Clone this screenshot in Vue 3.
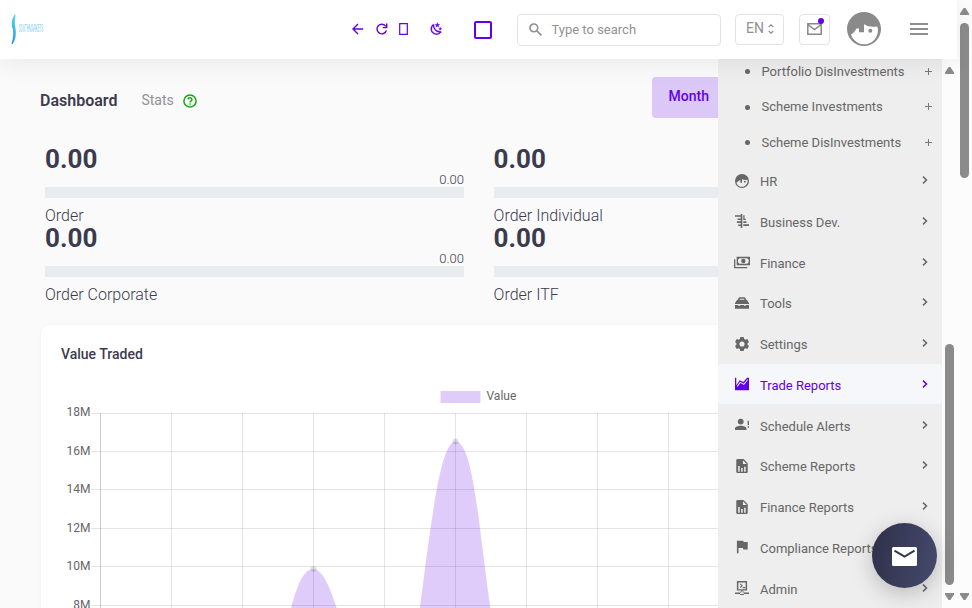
<script setup>
const stats = [
  { value: '0.00', side: '0.00', label: 'Order' },
  { value: '0.00', side: '', label: 'Order Individual' },
  { value: '0.00', side: '0.00', label: 'Order Corporate' },
  { value: '0.00', side: '', label: 'Order ITF' },
]
const subItems = ['Portfolio DisInvestments', 'Scheme Investments', 'Scheme DisInvestments']
const report = 'M14.5 1H5a2 2 0 0 0-2 2v18a2 2 0 0 0 2 2h14a2 2 0 0 0 2-2V7.500L14.5 1ZM13.500 9V3L19.500 9H13.500ZM6 12h2.400v9h-2.400v-9Zm4.700 3h2.400v6h-2.400v-6Zm4.700-2H17.800v8h-2.400v-8Z'
const items = [
  { name: 'HR', icon: 'M12 1a11 11 0 1 0 0 22 11 11 0 0 0 0-22ZM3.200 14.300C5.200 13.900 7.100 12.300 7.800 11H9.400v2.800a1.300 1.300 0 0 0 2.600 0V9.100h.6C13.900 10.400 16.500 10.700 20.600 10.100A8.800 8.800 0 0 1 3.200 14.300ZM16.500 11.800a1.400 1.400 0 1 0 0 2.800 1.400 1.400 0 0 0 0-2.800Z' },
  { name: 'Business Dev.', icon: 'M1 3h9V1h2.500v22H10v-3H6v-2.500h4v-2.500H4v-2.500h6v-2H5V8h5V5.500H1V3ZM14 3h2v5.500h2v2h-4V3ZM14 12.500h5v2.500h-5v-2.500ZM14 17h9v3h-9v-3Z' },
  { name: 'Finance', wide: true, icon: 'M4 4h20v13H4V4Zm4 2.200a3 3 0 0 1-2 2v4.600a3 3 0 0 1 2 2h12a3 3 0 0 1 2-2V8.200a3 3 0 0 1-2-2H8Zm6 1a3.300 3.300 0 1 1 0 6.600 3.300 3.300 0 0 1 0-6.600ZM0 8h2v11.500h18v2H0V8Z' },
  { name: 'Tools', icon: 'M8 3h8l2 2v2h1.500L23 12v1.500H1V12l3.500-5H6V5l2-2Zm.500 2.500V7h7V5.500h-7ZM1 15h5v1.500h3V15h6v1.500h3V15h5V21H1v-6Z' },
  { name: 'Settings', icon: 'm9.300 1-.6 3a8.500 8.500 0 0 0-2.100 1.200L3.700 4.100 1 8.800l2.300 2a8 8 0 0 0 0 2.400l-2.300 2 2.700 4.700 2.900-1.100A8.500 8.500 0 0 0 8.700 20l.6 3h5.400l.6-3a8.500 8.500 0 0 0 2.100-1.200l2.900 1.100 2.700-4.700-2.300-2a8 8 0 0 0 0-2.400l2.300-2-2.700-4.700-2.900 1.100A8.500 8.500 0 0 0 15.300 4l-.6-3H9.300ZM12 8a4 4 0 1 1 0 8 4 4 0 0 1 0-8Z' },
  { name: 'Trade Reports', active: true, icon: 'M1 2h2v12l5.500-8 5.500 3 6-7h3v20H1V2Zm3.500 15 5-6.500 5.500 3L21 6V4l-6.500 7.700L9 8.500l-4.500 6V17Z' },
  { name: 'Schedule Alerts', icon: 'M10 2a4.600 4.600 0 1 1 0 9.200 4.600 4.600 0 0 1 0-9.200ZM1 20v-2.500c0-3 5-4.500 9-4.500s9 1.500 9 4.500V20H1ZM20.800 5.500H23V12h-2.200V5.500Zm0 8.500H23V16.500h-2.200v-2.500Z' },
  { name: 'Scheme Reports', icon: report },
  { name: 'Finance Reports', icon: report },
  { name: 'Compliance Reports', icon: 'M4 2h10l.5 2H21v12h-7l-.5-2.500H6.500V22H4V2Z' },
  { name: 'Admin', icon: 'M4 1h16v15h-7v3h10v2.500H1V19h10v-3H4V1Zm2.300 2.200v10.600h11.400V3.200H6.300ZM9 4.500l4.500 4L9 12.500V10l2-1.500L9 7V4.500Zm4 6h4v2h-4v-2ZM9 17.500h6V23H9v-5.500Z' },
]
const cols = [171.5, 242.5, 313.5, 384.5, 455.5, 526.5, 597.5, 668.5]
const rows = [
  { y: 413.5, ty: 416, label: '18M' },
  { y: 451.5, ty: 455, label: '16M' },
  { y: 489.5, ty: 493, label: '14M' },
  { y: 528.5, ty: 532, label: '12M' },
  { y: 566.5, ty: 570, label: '10M' },
  { y: 605.5, ty: 608.5, label: '8M' },
]
</script>

<template>
  <div class="page">
    <div class="view">
      <header class="top">
        <svg class="logo" width="36" height="34" viewBox="0 0 36 34">
          <defs>
            <linearGradient id="lg" x1="0" x2="0" y1="0" y2="1">
              <stop offset="0" stop-color="#45d6f3" /><stop offset="1" stop-color="#2b9ae0" />
            </linearGradient>
          </defs>
          <path d="M5 2Q1.500 8 2.500 13Q5.500 20 2 31Q6.500 24 4.800 15Q3.300 10 5 2Z" fill="url(#lg)" stroke="url(#lg)" stroke-width="1.200" />
          <g transform="translate(9 19) scale(.31 1)"><text>SOUTHMARKETS</text></g>
        </svg>
        <div class="tools">
          <svg class="t1" width="12" height="12" viewBox="0 0 12 12"><path d="M11.200 6H1.200M6 1 1 6 6 11" /></svg>
          <svg class="t2" width="12" height="12" viewBox="0 0 12 12"><path d="M9.800 3.300A4.800 4.800 0 1 0 10.400 7.500" /><path d="M10.700.6v4H6.800" /></svg>
          <svg class="t3" width="9" height="12" viewBox="0 0 9 12"><path d="M.7.7h7.600v10.600H.7z" /></svg>
          <svg class="t4" width="13" height="13" viewBox="1 0 22 22.500"><path d="M17.750,4.090L15.220,6.030L16.130,9.090L13.500,7.280L10.870,9.090L11.780,6.030L9.250,4.090L12.440,4L13.500,1L14.560,4L17.750,4.090M21.250,11L19.610,12.250L20.200,14.230L18.500,13.060L16.800,14.230L17.390,12.250L15.750,11L17.810,10.950L18.500,9L19.190,10.950L21.250,11M18.970,15.950C19.800,15.870 20.690,17.050 20.160,17.800C19.840,18.250 19.500,18.670 19.080,19.070C15.170,23 8.840,23 4.940,19.070C1.030,15.170 1.030,8.830 4.940,4.930C5.340,4.530 5.760,4.170 6.210,3.850C6.960,3.320 8.140,4.210 8.060,5.040C7.790,7.900 8.750,10.870 10.950,13.060C13.140,15.260 16.100,16.220 18.970,15.950M17.330,17.970C14.500,17.810 11.700,16.640 9.530,14.500C7.360,12.310 6.200,9.500 6.040,6.680C3.230,9.820 3.340,14.640 6.350,17.660C9.370,20.670 14.190,20.780 17.330,17.970Z" class="solid" /></svg>
          <span class="square"></span>
        </div>
        <div class="search">
          <svg width="13" height="13" viewBox="0 0 14 14"><circle cx="5.200" cy="5.200" r="4.200" /><path d="m8.300 8.300 5 5" /></svg>
          <span>Type to search</span>
        </div>
        <div class="lang"><span>EN</span>
          <svg width="6" height="10" viewBox="0 0 6 10"><path d="M.7 3 3 .8 5.300 3M.7 7 3 9.200 5.300 7" /></svg>
        </div>
        <div class="mail">
          <svg width="15" height="12" viewBox="0 0 15 12"><path d="M.8.8h13.400v10.400H.8ZM.8 1.500l6.700 5 6.700-5" /></svg>
          <i></i>
        </div>
        <svg class="avatar" width="34" height="34" viewBox="0 0 34 34">
          <circle cx="17" cy="17" r="17" />
          <path d="M4 22.500C6 21.500 8 19.500 9.500 16.500H12V20.300H17V12.500H18C20 14.500 24 15 30.300 14.500A13.600 13.600 0 0 1 4 22.500Z" class="face" />
          <circle cx="23.300" cy="18.800" r="2" />
        </svg>
        <div class="burger"><b></b><b></b><b></b></div>
      </header>

      <div class="body">
        <main class="main">
          <div class="heading">
            <h1>Dashboard</h1>
            <span class="sub">Stats</span>
            <svg width="14" height="14" viewBox="0 0 14 14"><circle cx="7" cy="7" r="6.100" /><path d="M5.100 5.600a1.900 1.900 0 1 1 2.900 1.600c-.7.400-1 .7-1 1.400M7 9.500v1.300" /></svg>
            <span class="month">Month</span>
          </div>
          <div class="stats">
            <div v-for="s in stats" :key="s.label" class="stat">
              <div class="num">{{ s.value }}</div>
              <div class="side">{{ s.side }}</div>
              <div class="bar"></div>
              <div class="label">{{ s.label }}</div>
            </div>
          </div>
          <section class="card">
            <h2>Value Traded</h2>
            <svg class="chart" width="677" height="228" viewBox="41 380 677 228">
              <path d="M242.500 758.500C284.500 702.500 285.100 569 313.500 569S362.700 758.500 384.500 758.500C419.500 727 427.100 441.500 455.500 441.500S479.900 654.500 526.500 758.500Z" class="area" />
              <rect x="440.500" y="391" width="40" height="12" class="area" />
              <text x="486.500" y="400">Value</text>
              <path v-for="x in cols" :key="x" :d="`M${x} 413V608`" class="grid" />
              <path d="M100.500 413V608" class="axis" />
              <g v-for="r in rows" :key="r.y">
                <path :d="`M91 ${r.y}H718`" class="grid" />
                <text x="90.500" :y="r.ty" text-anchor="end">{{ r.label }}</text>
              </g>
              <circle cx="313.500" cy="569" r="3" class="dot" />
              <circle cx="455.500" cy="441.500" r="3" class="dot" />
            </svg>
          </section>
        </main>
        <aside class="sidebar">
          <div v-for="s in subItems" :key="s" class="subitem"><i></i><span>{{ s }}</span><em></em></div>
          <div v-for="m in items" :key="m.name" class="item" :class="{ active: m.active }">
            <svg class="ico" :class="{ wide: m.wide }" width="14" height="14" :viewBox="m.wide ? '0 0 24 24' : '1 1 22 22'"><path :d="m.icon" fill-rule="evenodd" /></svg>
            <span>{{ m.name }}</span>
            <svg class="chev" width="6" height="8" viewBox="0 0 6 8"><path d="m1 .6 3.500 3.400L1 7.400" /></svg>
          </div>
        </aside>
        <div class="scroll inner"><i class="up"></i><b></b><i class="down"></i></div>
      </div>
    </div>
    <div class="scroll outer"><i class="up"></i><b></b><i class="down"></i></div>
    <div class="fab">
      <svg width="25" height="19" viewBox="0 0 25 19"><rect width="25" height="19" rx="1.500" /><path d="m2.500 3.700 10 6 10-6" /></svg>
    </div>
  </div>
</template>

<style>
body { overflow: hidden; background: #fcfcfc; }
</style>
<style scoped>
* { box-sizing: border-box; }
.page { position: relative; display: flex; width: 972px; height: 608px; overflow: hidden; font-family: Roboto, sans-serif; color: #3c3b4e; }
.view { width: 957px; height: 608px; display: flex; flex-direction: column; }
.top { height: 59px; flex: none; display: flex; align-items: center; background: #fff; box-shadow: 0 4px 25px rgba(0, 0, 0, .07); position: relative; z-index: 2; }
.logo { margin-left: 10px; flex: none; filter: blur(.5px); }
.logo text { font: 500 10px Roboto, sans-serif; fill: #9fd8ea; }
.tools { display: flex; align-items: center; margin-left: 306px; height: 20px; margin-top: -1px; }
.tools svg { fill: none; stroke: #6200ea; stroke-width: 1.400; }
.tools .t3 { stroke-width: 1.200; }
.tools .solid { fill: #6200ea; stroke: #6200ea; stroke-width: .5; }
.t2 { margin-left: 12px; }
.t3 { margin-left: 11px; }
.t4 { margin-left: 22px; margin-top: -1px; }
.square { width: 18px; height: 18px; margin-left: 31px; margin-top: 2px; border: 2px solid #6200ea; border-radius: 2px; }
.search { display: flex; align-items: center; width: 204px; height: 32px; margin-left: 25px; margin-top: 1px; padding-left: 11px; border: 1px solid #e3e3e3; border-radius: 4px; color: #929292; font-size: 13px; }
.search svg { fill: none; stroke: #8e8e8e; stroke-width: 1.700; margin-right: 9.500px; margin-top: -1px; }
.search span { margin-top: -1px; }
.lang { display: flex; align-items: center; width: 49px; height: 31px; margin-left: 14px; padding-left: 10px; border: 1px solid #e3e3e3; border-radius: 4px; color: #929292; font-size: 14px; }
.lang span { margin-top: -3px; }
.lang svg { margin-left: 4px; margin-top: -1px; fill: none; stroke: #8e8e8e; stroke-width: 1.200; }
.mail { position: relative; display: flex; align-items: center; justify-content: center; width: 31px; height: 31px; margin-left: 15px; border: 1px solid #e3e3e3; border-radius: 4px; }
.mail svg { fill: none; stroke: #888; stroke-width: 1.500; margin-top: -2px; }
.mail i { position: absolute; left: 18px; top: 3px; width: 6px; height: 6px; border-radius: 50%; background: #6200ea; }
.avatar { margin-left: 17px; margin-top: -1px; fill: #8a8a8a; }
.face { fill: #fff; }
.burger { display: flex; flex-direction: column; gap: 3px; margin-left: 29px; margin-top: -1px; }
.burger b { width: 18px; height: 2px; background: #8e8e8e; }
.body { flex: 1; min-height: 0; display: flex; }
.main { width: 718px; overflow: hidden; background: #fafafa; }
.heading { display: flex; align-items: center; height: 41px; margin-top: 18px; padding-left: 40px; }
.heading > * { flex: none; }
h1 { margin: 0; font-size: 16px; font-weight: 600; width: 101.400px; margin-top: 5px; }
.sub { font-size: 14px; color: #929292; width: 41.600px; margin-top: 5px; }
.heading svg { fill: none; stroke: #12a812; stroke-width: 1.500; margin-top: 7px; }
.month { width: 90px; height: 41px; margin-left: 455px; padding-left: 16.500px; line-height: 39px; border-radius: 4px; background: #dbc8f6; color: #6200ea; font-weight: 500; font-size: 14px; }
.stats { display: grid; grid-template-columns: 419px 419px; column-gap: 29.600px; grid-auto-rows: 79px; padding: 24px 0 0 45px; }
.num { height: 31px; line-height: 34px; font-size: 26px; font-weight: 700; }
.side { height: 14px; line-height: 13px; text-align: right; font-size: 13px; font-weight: 300; }
.bar { height: 11px; background: #e9ecef; }
.label { height: 23px; line-height: 35px; font-size: 16px; font-weight: 300; white-space: nowrap; }
.card { margin: 25px 0 0 41px; width: 900px; height: 300px; background: #fff; border-radius: 8px; box-shadow: 0 0 3px rgba(0, 0, 0, .06); overflow: hidden; }
h2 { margin: 0; height: 55px; line-height: 58px; padding-left: 20px; font-size: 14px; font-weight: 500; }
.chart { display: block; }
.chart text { font: 12px Roboto, sans-serif; fill: #666; }
.area { fill: rgba(98, 0, 234, .2); }
.grid { stroke: rgba(0, 0, 0, .1); }
.axis { stroke: rgba(0, 0, 0, .2); }
.dot { fill: rgba(0, 0, 0, .12); }
.sidebar { width: 224px; overflow: hidden; background: #eee; color: #666; font-size: 13px; }
.subitem { display: flex; align-items: center; height: 35.500px; padding-left: 27px; }
.subitem:first-child { margin-top: -5.300px; }
.subitem i { width: 5px; height: 5px; border-radius: 50%; background: #666; margin-right: 11.500px; margin-top: 1px; }
.subitem span { width: 163.500px; }
.subitem em { width: 7px; height: 7px; background: linear-gradient(#777, #777) center/7px 1px no-repeat, linear-gradient(#777, #777) center/1px 7px no-repeat; }
.item { display: flex; align-items: center; height: 40px; margin-bottom: .75px; padding-left: 17px; border-radius: 4px; }
.item span { width: 162px; margin-top: 3px; white-space: nowrap; }
.ico { fill: currentColor; margin-right: 11px; margin-top: 1px; }
.wide { width: 16px; height: 16px; margin-left: -1px; margin-right: 10px; }
.chev { fill: none; stroke: currentColor; stroke-width: 1.500; }
.active { background: #f6f7fb; color: #6200ea; }
.scroll { width: 15px; flex: none; display: flex; flex-direction: column; align-items: center; background: #fcfcfc; }
.scroll b { width: 9px; border-radius: 5px; background: #8b8b8b; }
.up, .down { width: 9px; height: 7px; background: #8b8b8b; }
.up { clip-path: polygon(40% 0, 60% 0, 100% 80%, 100% 100%, 0 100%, 0 80%); margin-top: 8px; }
.down { clip-path: polygon(40% 100%, 60% 100%, 100% 20%, 100% 0, 0 0, 0 20%); margin-top: auto; margin-bottom: 8px; }
.inner b { height: 241px; margin-top: 270px; }
.outer b { height: 155px; margin-top: 8px; }
.fab { position: absolute; z-index: 3; left: 872px; top: 523px; width: 65px; height: 65px; border-radius: 50%; display: flex; align-items: center; justify-content: center; background: linear-gradient(100deg, #2f3049, #454a6d); box-shadow: 0 6px 22px rgba(0, 0, 0, .22); }
.fab svg { fill: #fff; margin-top: 2px; }
.fab path { fill: none; stroke: #343650; stroke-width: 2; }
</style>
